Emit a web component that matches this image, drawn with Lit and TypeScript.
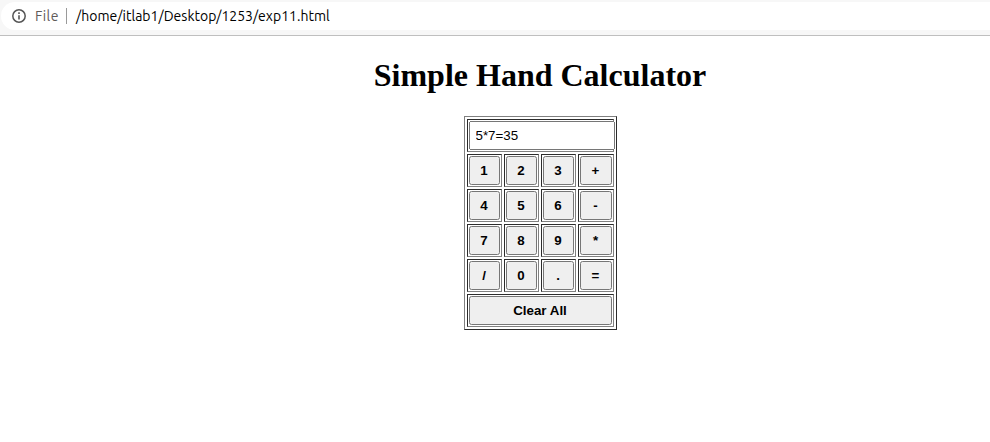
import { LitElement, html, css } from "lit";
import { customElement, state } from "lit/decorators.js";

@customElement("app-root")
export class AppRoot extends LitElement {
  static styles = css`
    :host { display: block; width: 100%; height: 442px; overflow: hidden; background: #fff; }
    .bar { box-sizing: border-box; height: 36px; background: #f7f7f7; border-bottom: 1px solid #bfbfbf; padding-top: 2px; }
    .omnibox { display: flex; align-items: center; width: 1040px; height: 28px; border-radius: 14px; background: #fff; margin-left: 1px; box-sizing: border-box; padding-left: 11px; font: 14px Ubuntu, "Noto Sans", sans-serif; color: #000; }
    .info { width: 14px; height: 14px; flex: none; }
    .scheme { color: #5f5a5a; margin-left: 9px; width: 24px; padding-bottom: 1px; letter-spacing: 0.4px; }
    .sep { width: 1px; height: 16px; background: #9a9a9a; margin: 0 9px 0 7px; }
    .url { white-space: pre; padding-bottom: 1px; letter-spacing: 0.02px; }
    .page { width: 1080px; color: #000; }
    h1 { margin: 21px 0 22px; font: bold 32px/37px "Liberation Serif", serif; text-align: center; }
    table { table-layout: fixed; width: 153px; height: 214px; margin: 0 0 0 463.5px; border: 1px outset gray; border-spacing: 2px; border-collapse: separate; }
    td { box-sizing: border-box; border: 1px inset gray; padding: 1px; height: 33px; line-height: 0; vertical-align: top; }
    .display { box-sizing: border-box; display: block; width: 146px; height: 29px; padding: 0 5px; font: 13.333px "Liberation Sans", sans-serif; }
    button { box-sizing: border-box; display: block; width: 100%; height: 29px; padding: 0; font: bold 13.333px "Liberation Sans", sans-serif; }
    .top { height: 33px; }
    .slot { height: 29px; }
  `;

  @state() private value = "5*7=35";

  private rows = ["123+", "456-", "789*", "/0.="];

  private press(key: string) {
    if (key !== "=") {
      this.value += key;
      return;
    }
    const m = /^(-?[\d.]+)([-+*/])([\d.]+)$/.exec(this.value);
    if (!m) return;
    const a = Number(m[1]);
    const b = Number(m[3]);
    const r = m[2] === "+" ? a + b : m[2] === "-" ? a - b : m[2] === "*" ? a * b : a / b;
    this.value += "=" + r;
  }

  render() {
    return html`
      <div class="bar">
        <div class="omnibox">
          <svg class="info" viewBox="0 0 14 14">
            <circle cx="7" cy="7" r="6.2" fill="none" stroke="#555" stroke-width="1.5" />
            <path d="M6.2 6.2h1.6v4.4H6.2zM6.2 3.3h1.6v1.6H6.2z" fill="#555" />
          </svg>
          <span class="scheme">File</span><span class="sep"></span>
          <span class="url">/home/itlab1/Desktop/1253/exp11.html</span>
        </div>
      </div>
      <div class="page">
        <h1>Simple Hand Calculator</h1>
        <table>
          <colgroup><col style="width:35px" /><col style="width:35px" /><col style="width:35px" /><col style="width:36px" /></colgroup>
          <tr><td class="top" colspan="4"><div class="slot"><input class="display" .value=${this.value} /></div></td></tr>
          ${this.rows.map(
            (row) => html`<tr>${[...row].map((k) => html`<td><button @click=${() => this.press(k)}>${k}</button></td>`)}</tr>`
          )}
          <tr><td colspan="4"><button @click=${() => (this.value = "")}>Clear All</button></td></tr>
        </table>
      </div>
    `;
  }
}
